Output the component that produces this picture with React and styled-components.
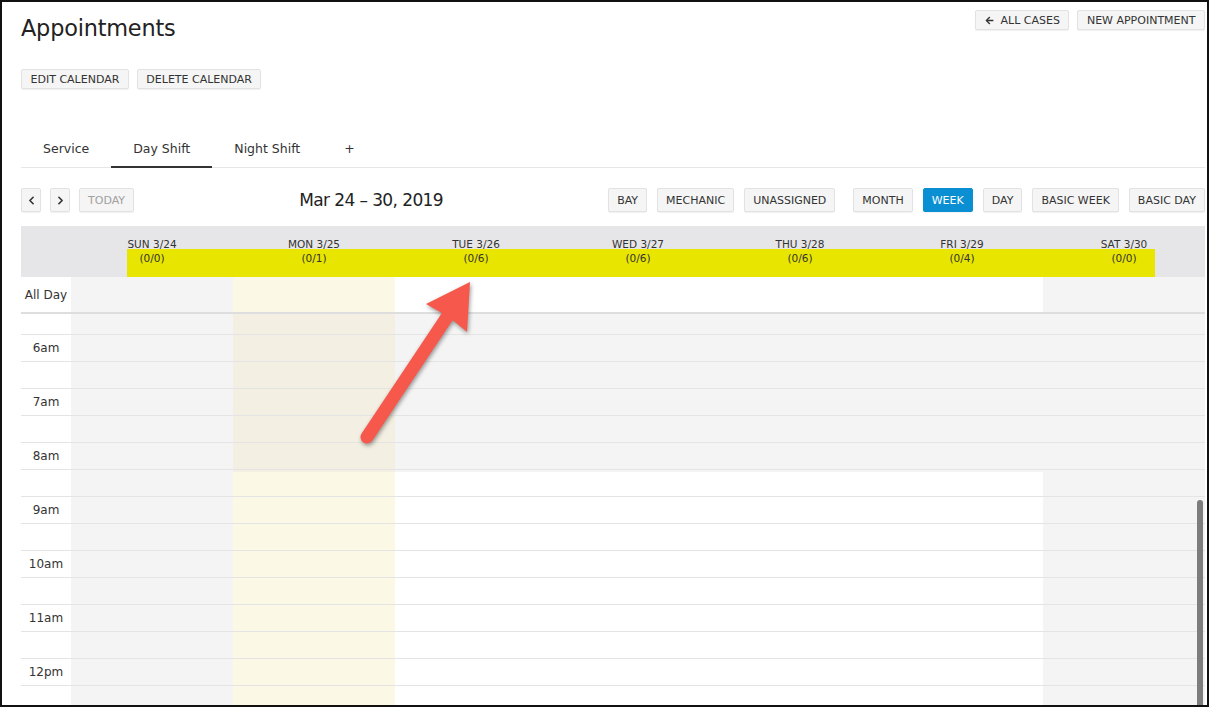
import React from 'react';
import styled, { createGlobalStyle } from 'styled-components';
import { ChevronLeft, ChevronRight } from 'lucide-react';
import { FaArrowLeft } from 'react-icons/fa';

const GlobalStyle = createGlobalStyle`
  html, body { margin: 0; padding: 0; background: #fff; }
  body { font-family: "DejaVu Sans", "Noto Sans", sans-serif; color: #333; }
  *, *::before, *::after { box-sizing: border-box; }
`;

const OFF = '#f4f4f4';
const TODAY = '#fcf8e6';
const TODAY_OFF = '#f3efe2';

const Frame = styled.div`
  position: relative;
  width: 1209px;
  height: 707px;
  border: 2px solid #111;
  overflow: hidden;
  background: #fff;
`;

const Page = styled.div`
  padding: 8px 2px 0 19px;
`;

const TopBar = styled.header`
  display: flex;
  justify-content: space-between;
  align-items: flex-start;
`;

const Title = styled.h1`
  margin: 5px 0 0;
  font-size: 22.4px;
  font-weight: 400;
  line-height: 26px;
  letter-spacing: -0.2px;
  color: #222;
`;

const ButtonRow = styled.div`
  display: flex;
  align-items: center;
  gap: ${(p) => p.$gap ?? 8}px;
  margin-top: ${(p) => p.$top ?? 0}px;
`;

const Button = styled.button`
  display: inline-flex;
  align-items: center;
  justify-content: center;
  gap: 7px;
  height: ${(p) => (p.$tall ? 24 : 20)}px;
  min-width: ${(p) => (p.$square ? 20 : 0)}px;
  padding: 0 ${(p) => (p.$square ? 0 : p.$tall ? 8 : 8.5)}px;
  font-family: inherit;
  font-size: 11px;
  line-height: 1;
  white-space: nowrap;
  color: ${(p) => (p.$active ? '#fff' : p.$muted ? '#a0a0a0' : '#333')};
  background: ${(p) => (p.$active ? '#0b8fd3' : '#f5f5f5')};
  border: 1px solid ${(p) => (p.$active ? '#0b8fd3' : '#e2e2e2')};
  border-radius: 2px;
  box-shadow: 0 1px 1px rgba(0, 0, 0, 0.06);
  cursor: pointer;
`;

const Tabs = styled.nav`
  display: flex;
  margin-top: 39px;
  border-bottom: 1px solid #e6e6e6;
`;

const Tab = styled.div`
  height: 40px;
  margin-bottom: -1px;
  padding: 3px 22px 0;
  font-size: 12.5px;
  line-height: 35px;
  color: #333;
  border-bottom: 2px solid ${(p) => (p.$active ? '#333' : 'transparent')};
  cursor: pointer;
`;

const Toolbar = styled.div`
  display: flex;
  justify-content: space-between;
  align-items: center;
  height: 24px;
  margin-top: 20px;
`;

const DateTitle = styled.h2`
  margin: 0;
  font-size: 17px;
  font-weight: 400;
  letter-spacing: -0.6px;
  color: #222;
`;

const Calendar = styled.section`
  width: 1184px;
  margin-top: 14px;
`;

const columns = `50px repeat(7, 1fr)`;

const HeadRow = styled.div`
  position: relative;
  display: grid;
  grid-template-columns: ${columns};
  height: 51px;
  background: #e6e6e8;
`;

const CountMark = styled.span`
  position: absolute;
  left: 106px;
  top: 23px;
  width: 1028px;
  height: 28px;
  background: #e8e500;
`;

const DayHead = styled.div`
  position: relative;
  display: flex;
  flex-direction: column;
  align-items: center;
  padding-top: 11px;
  font-size: 10.5px;
  line-height: 14px;
  color: #333;
`;

const AllDayRow = styled.div`
  display: grid;
  grid-template-columns: ${columns};
  height: 35px;
`;

const toneColor = { off: OFF, today: TODAY, plain: '#fff' };

const Cell = styled.div`
  background: ${(p) => toneColor[p.$tone] || '#fff'};
`;

const AxisLabel = styled.div`
  display: flex;
  align-items: center;
  justify-content: center;
  width: 50px;
  font-size: 12px;
  color: #333;
`;

const Divider = styled.div`
  height: 2px;
  background: #dedede;
`;

const Body = styled.div`
  position: relative;
  display: grid;
  grid-template-columns: ${columns};
  grid-template-rows: 20px repeat(14, 27px);
`;

const ColumnBg = styled.div`
  grid-row: 1 / -1;
  grid-column: ${(p) => p.$col};
  background: linear-gradient(
    ${(p) => p.$early} 0 158px,
    ${(p) => p.$late} 158px
  );
`;

const Slat = styled.div`
  grid-column: 1 / -1;
  grid-row: ${(p) => p.$row};
  display: flex;
  border-top: ${(p) => (p.$first ? 'none' : '1px solid #e4e4e4')};
`;

const Scrollbar = styled.div`
  position: absolute;
  top: 186px;
  right: 2px;
  width: 6px;
  height: 240px;
  border-radius: 3px;
  background: #7d7d7d;
`;

const Pointer = styled.svg`
  position: absolute;
  left: -2px;
  top: -2px;
  width: 1209px;
  height: 707px;
  pointer-events: none;
  filter: drop-shadow(1px 2px 2px rgba(0, 0, 0, 0.4));
`;

const days = [
  { label: 'SUN 3/24', count: '(0/0)', kind: 'weekend' },
  { label: 'MON 3/25', count: '(0/1)', kind: 'today' },
  { label: 'TUE 3/26', count: '(0/6)', kind: 'work' },
  { label: 'WED 3/27', count: '(0/6)', kind: 'work' },
  { label: 'THU 3/28', count: '(0/6)', kind: 'work' },
  { label: 'FRI 3/29', count: '(0/4)', kind: 'work' },
  { label: 'SAT 3/30', count: '(0/0)', kind: 'weekend' },
];

const allDayTone = { weekend: 'off', today: 'today', work: 'plain' };
const bodyTones = {
  weekend: [OFF, OFF],
  today: [TODAY_OFF, TODAY],
  work: [OFF, '#fff'],
};

const hours = ['6am', '7am', '8am', '9am', '10am', '11am', '12pm'];

// first row is the tail of the 5:30 slot, then half-hour slots from 6am
const slats = Array.from({ length: 15 }, (_, i) => ({
  row: i + 1,
  label: i > 0 && i % 2 === 1 ? hours[(i - 1) / 2] : '',
}));

export default function App() {
  return (
    <>
      <GlobalStyle />
      <Frame>
        <Page>
          <TopBar>
            <Title>Appointments</Title>
            <ButtonRow>
              <Button>
                <FaArrowLeft size={9} />
                ALL CASES
              </Button>
              <Button>NEW APPOINTMENT</Button>
            </ButtonRow>
          </TopBar>

          <ButtonRow $top={28}>
            <Button>EDIT CALENDAR</Button>
            <Button>DELETE CALENDAR</Button>
          </ButtonRow>

          <Tabs>
            <Tab>Service</Tab>
            <Tab $active>Day Shift</Tab>
            <Tab>Night Shift</Tab>
            <Tab>+</Tab>
          </Tabs>

          <Toolbar>
            <ButtonRow $gap={9}>
              <Button $tall $square>
                <ChevronLeft size={13} strokeWidth={3} />
              </Button>
              <Button $tall $square>
                <ChevronRight size={13} strokeWidth={3} />
              </Button>
              <Button $tall $muted>TODAY</Button>
            </ButtonRow>
            <DateTitle>Mar 24 – 30, 2019</DateTitle>
            <ButtonRow $gap={18}>
              <ButtonRow $gap={10}>
                <Button $tall>BAY</Button>
                <Button $tall>MECHANIC</Button>
                <Button $tall>UNASSIGNED</Button>
              </ButtonRow>
              <ButtonRow $gap={10}>
                <Button $tall>MONTH</Button>
                <Button $tall $active>WEEK</Button>
                <Button $tall>DAY</Button>
                <Button $tall>BASIC WEEK</Button>
                <Button $tall>BASIC DAY</Button>
              </ButtonRow>
            </ButtonRow>
          </Toolbar>

          <Calendar>
            <HeadRow>
              <CountMark />
              <div />
              {days.map((d) => (
                <DayHead key={d.label}>
                  <span>{d.label}</span>
                  <span>{d.count}</span>
                </DayHead>
              ))}
            </HeadRow>

            <AllDayRow>
              <AxisLabel>All Day</AxisLabel>
              {days.map((d) => (
                <Cell key={d.label} $tone={allDayTone[d.kind]} />
              ))}
            </AllDayRow>
            <Divider />

            <Body>
              {days.map((d, i) => (
                <ColumnBg
                  key={d.label}
                  $col={i + 2}
                  $early={bodyTones[d.kind][0]}
                  $late={bodyTones[d.kind][1]}
                />
              ))}
              {slats.map((s) => (
                <Slat key={s.row} $row={s.row} $first={s.row === 1}>
                  <AxisLabel>{s.label}</AxisLabel>
                </Slat>
              ))}
              <Scrollbar />
            </Body>
          </Calendar>
        </Page>

        <Pointer viewBox="0 0 1209 707">
          <line
            x1="367"
            y1="437"
            x2="447"
            y2="317"
            stroke="#f6584c"
            strokeWidth="13"
            strokeLinecap="round"
          />
          <polygon
            points="470,282 426,304 440,312 455,322 467,332"
            fill="#f6584c"
          />
        </Pointer>
      </Frame>
    </>
  );
}
